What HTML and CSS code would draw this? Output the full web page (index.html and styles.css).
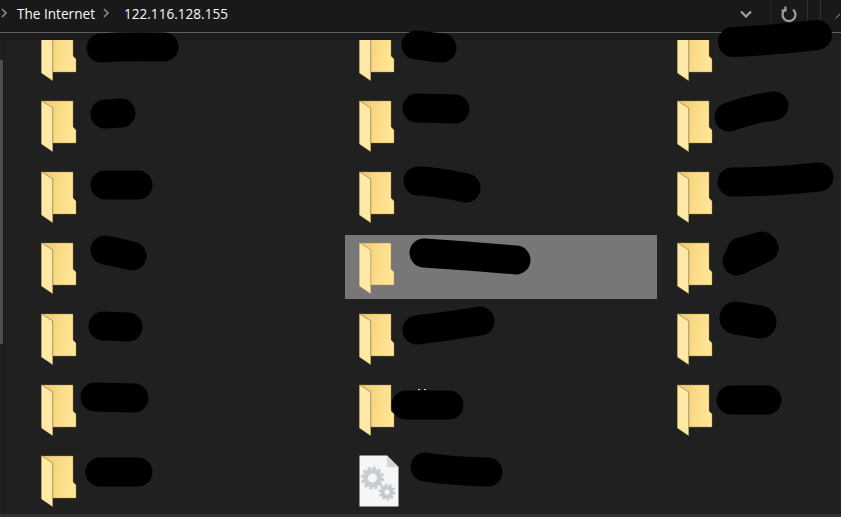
FILE: index.html
```html
<!DOCTYPE html>
<html>

<head>
    <title>122.116.128.155</title>
    <meta charset="UTF-8">
    <link rel="stylesheet" href="styles.css">
</head>

<body>
    <svg class="defs" width="0" height="0">
        <defs>
            <linearGradient id="folder-back" x1="0" x2="1" y1="0" y2="0.15">
                <stop offset="0" stop-color="#eccb6e" />
                <stop offset="0.6" stop-color="#fbdc88" />
                <stop offset="1" stop-color="#ffe596" />
            </linearGradient>
            <symbol id="folder" viewBox="0 0 36 52">
                <path d="M1 1H32V27L35 30V43H12V8Z" fill="url(#folder-back)" stroke="#a68c4c" stroke-width="0.4" />
                <path d="M0.5 1L11.5 8V51.5L0.5 44Z" fill="#ffe9a6" stroke="#e3c573" stroke-width="0.4" />
            </symbol>
        </defs>
    </svg>

    <header class="address-bar">
        <div class="crumbs">
            <svg class="chevron first" width="8" height="10" viewBox="0 0 8 10"><path d="M1 1L5 5L1 9" /></svg>
            <span>The Internet</span>
            <svg class="chevron" width="8" height="10" viewBox="0 0 8 10"><path d="M1 1L5 5L1 9" /></svg>
            <span>122.116.128.155</span>
        </div>
        <div class="tools">
            <svg class="history" width="12" height="8" viewBox="0 0 12 8"><path d="M1 1.5L6 6.5L11 1.5" /></svg>
            <div class="refresh">
                <svg width="18" height="18" viewBox="0 0 18 18"><path d="M5 3.5A6.5 6.5 0 1 0 13 3.5" /><path d="M5.5 0.5V4.5H1.5" /></svg>
            </div>
            <div class="search-edge">
                <svg width="6" height="6" viewBox="0 0 6 6"><path d="M0.5 5.5L5 1" /></svg>
            </div>
        </div>
    </header>

    <div class="strip"></div>

    <main class="pane">
        <div class="scroll-track"><div class="scroll-thumb"></div></div>
        <div class="files">
            <div class="tile"><svg class="icon"><use href="#folder" /></svg></div>
            <div class="tile"><svg class="icon"><use href="#folder" /></svg></div>
            <div class="tile"><svg class="icon"><use href="#folder" /></svg></div>
            <div class="tile"><svg class="icon"><use href="#folder" /></svg></div>
            <div class="tile"><svg class="icon"><use href="#folder" /></svg></div>
            <div class="tile"><svg class="icon"><use href="#folder" /></svg></div>
            <div class="tile"><svg class="icon"><use href="#folder" /></svg></div>
            <div class="tile"><svg class="icon"><use href="#folder" /></svg></div>
            <div class="tile"><svg class="icon"><use href="#folder" /></svg></div>
            <div class="tile"><svg class="icon"><use href="#folder" /></svg></div>
            <div class="tile selected"><svg class="icon"><use href="#folder" /></svg></div>
            <div class="tile"><svg class="icon"><use href="#folder" /></svg></div>
            <div class="tile"><svg class="icon"><use href="#folder" /></svg></div>
            <div class="tile"><svg class="icon"><use href="#folder" /></svg></div>
            <div class="tile"><svg class="icon"><use href="#folder" /></svg></div>
            <div class="tile"><svg class="icon"><use href="#folder" /></svg></div>
            <div class="tile"><svg class="icon"><use href="#folder" /></svg></div>
            <div class="tile"><svg class="icon"><use href="#folder" /></svg></div>
            <div class="tile"><svg class="icon"><use href="#folder" /></svg></div>
            <div class="tile">
                <svg class="icon file-icon" viewBox="0 0 40 52">
                    <path d="M0.5 0.5H28L39.5 12V51.5H0.5Z" fill="#f4f6f8" />
                    <path d="M28 0.5L39.5 12H28Z" fill="#d5d6d4" />
                    <circle cx="13.5" cy="23" r="7" fill="none" stroke="#c8cdd2" stroke-width="5" />
                    <circle cx="13.5" cy="23" r="10" fill="none" stroke="#c8cdd2" stroke-width="3" stroke-dasharray="3 2.24" />
                    <circle cx="28" cy="37" r="4.6" fill="none" stroke="#c5cace" stroke-width="4" />
                    <circle cx="28" cy="37" r="7.2" fill="none" stroke="#c5cace" stroke-width="2.4" stroke-dasharray="2.4 2.1" />
                </svg>
            </div>
            <div class="tile"></div>
        </div>
    </main>

    <div class="bottom-edge"></div>

    <!-- scribbled-out file names -->
    <svg class="scribbles" width="841" height="517" viewBox="0 0 841 517">
        <path d="M101 48Q120 46 164 47" stroke-width="29" />
        <path d="M416 45L442 48" stroke-width="29" />
        <path d="M733 42Q775 40 817 35" stroke-width="30" />
        <path d="M105 114L121 113" stroke-width="29" />
        <path d="M417 108L455 109" stroke-width="29" />
        <path d="M729 117Q755 108 774 106" stroke-width="29" />
        <path d="M105 185L138 185" stroke-width="29" />
        <path d="M418 181Q440 182 466 188" stroke-width="29" />
        <path d="M732 182Q775 182 819 177" stroke-width="29" />
        <path d="M105 250Q120 253 132 256" stroke-width="29" />
        <path d="M424 253Q470 256 516 260" stroke-width="29" />
        <path d="M737 261L764 248" stroke-width="29" />
        <path d="M741 252L762 246" stroke-width="29" />
        <path d="M103 326L128 327" stroke-width="29" />
        <path d="M417 330Q450 326 480 321" stroke-width="29" />
        <path d="M736 318L760 322" stroke-width="33" />
        <path d="M95 397L134 398" stroke-width="29" />
        <path d="M406 405L449 405" stroke-width="29" />
        <path class="speck" d="M418 389.5H420M424 389.5H426" />
        <path d="M731 400L767 400" stroke-width="29" />
        <path d="M100 472L138 472" stroke-width="29" />
        <path d="M425 467Q450 471 488 472" stroke-width="29" />
    </svg>
</body>

</html>
```

FILE: styles.css
```css
html {
    font-size: 16px;
    font-family: 'Open Sans', sans-serif;
}

body {
    margin: 0;
    width: 841px;
    height: 517px;
    overflow: hidden;
    background-color: #202020;
    color: #f8f8f8;
    display: flex;
    flex-direction: column;
}

.defs {
    position: absolute;
}

.address-bar {
    display: flex;
    flex-direction: row;
    justify-content: space-between;
    height: 32px;
    background-color: #191919;
    border-bottom: 1px solid #5c5c5c;
    box-sizing: content-box;
}

.crumbs {
    display: flex;
    flex-direction: row;
    align-items: center;
    font-size: 13.6px;
    padding-bottom: 6px;
    box-sizing: border-box;
}

.chevron {
    margin: 0 13px 0 8px;
    fill: none;
    stroke: #8a8a8a;
    stroke-width: 1.6;
}

.chevron.first {
    margin: 0 8px 0 1px;
}

.tools {
    display: flex;
    flex-direction: row;
    align-items: stretch;
}

.tools svg {
    fill: none;
    stroke: #a0a0a0;
    stroke-width: 2.2;
}

.history {
    align-self: center;
    margin-right: 18px;
    margin-bottom: 4px;
}

.refresh {
    width: 38px;
    display: flex;
    align-items: center;
    justify-content: center;
    border-left: 1px solid #262626;
    border-right: 1px solid #333333;
    padding-bottom: 3px;
    box-sizing: border-box;
}

.search-edge {
    width: 20px;
    border-left: 1px solid #333333;
    display: flex;
    align-items: center;
    justify-content: flex-end;
    margin-left: 12px;
}

.search-edge svg {
    stroke-width: 1;
}

.strip {
    height: 7px;
    background-color: #1c1c1c;
}

.pane {
    flex: 1;
    min-height: 0;
    display: flex;
    flex-direction: row;
    overflow: hidden;
}

.scroll-track {
    width: 5px;
    border-right: 1px solid #171717;
    background-color: #202020;
}

.scroll-thumb {
    width: 3px;
    height: 284px;
    margin-top: 20px;
    background-color: #4d4d4d;
}

.files {
    display: grid;
    grid-template-columns: repeat(3, 312px);
    grid-auto-rows: 64px;
    gap: 7px 6px;
    margin: -18px 0 0 23px;
}

.tile {
    display: flex;
    align-items: center;
    padding: 2px 0 0 14px;
    box-sizing: border-box;
}

.tile.selected {
    background-color: #777777;
}

.icon {
    width: 36px;
    height: 52px;
}

.file-icon {
    width: 40px;
    height: 52px;
}

.bottom-edge {
    height: 3px;
    background-color: #333333;
}

.scribbles {
    position: absolute;
    left: 0;
    top: 0;
    fill: none;
    stroke: #000000;
    stroke-linecap: round;
    stroke-linejoin: round;
}

.scribbles .speck {
    stroke: #d8d8d8;
    stroke-width: 1;
    stroke-linecap: butt;
}
```
